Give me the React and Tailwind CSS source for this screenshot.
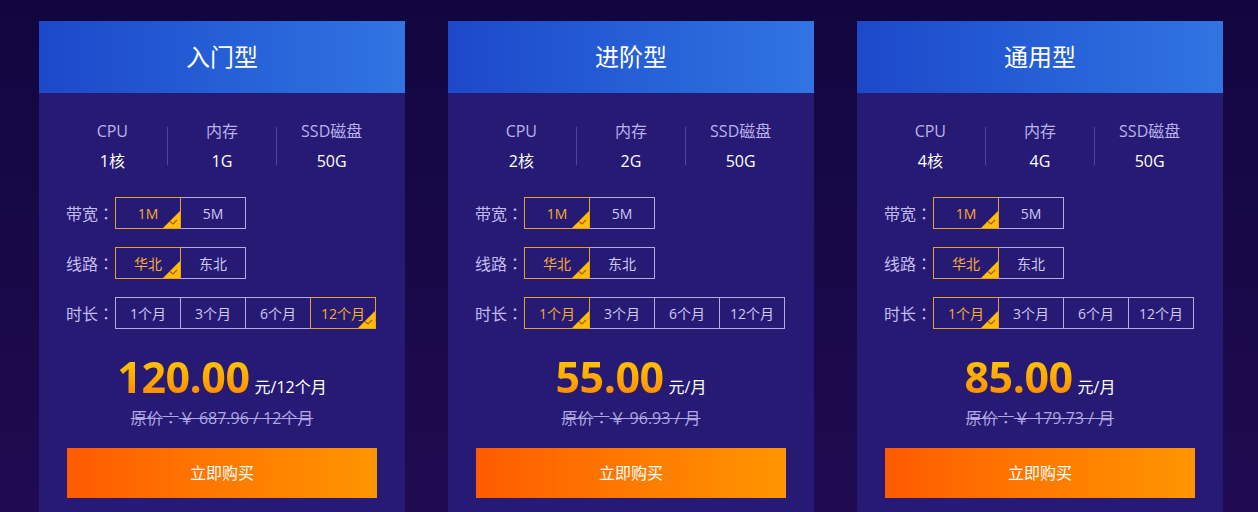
import React from "react";

const plans = [
  { name: "入门型", cpu: "1核", mem: "1G", disk: "50G", dur: 3, price: "120.00", unit: "元/12个月", orig: "￥ 687.96 / 12个月" },
  { name: "进阶型", cpu: "2核", mem: "2G", disk: "50G", dur: 0, price: "55.00", unit: "元/月", orig: "￥ 96.93 / 月" },
  { name: "通用型", cpu: "4核", mem: "4G", disk: "50G", dur: 0, price: "85.00", unit: "元/月", orig: "￥ 179.73 / 月" },
];

const Check = () => (
  <svg className="absolute right-0 bottom-0" width="17" height="17" viewBox="0 0 17 17">
    <path d="M17 0V17H0Z" fill="#ffbe00" />
    <path d="M7 10.5l3 2.5 4-4" stroke="#b8561a" strokeWidth="1.2" fill="none" />
  </svg>
);

// full-width colon, centred like the reference
const Colon = () => <span className="font-['Noto_Sans_CJK_TC']">：</span>;

const OptionRow = ({ label, items, active }) => (
  <div className="flex items-center h-[32px]">
    <span className="w-[49px] text-[16px] text-[#c3bcf0] whitespace-nowrap">
      {label}
      <Colon />
    </span>
    <div className="flex">
      {items.map((it, i) => (
        <div
          key={it}
          className={
            "relative w-[66px] h-[32px] flex items-center justify-center text-[14px] border " +
            (i > 0 ? "-ml-px " : "") +
            (i === active
              ? "z-10 border-[#e9a12e] text-[#f7ad2e]"
              : "border-[#b3abe8] text-[#cfc9f3]")
          }
        >
          {it}
          {i === active && <Check />}
        </div>
      ))}
    </div>
  </div>
);

const Spec = ({ label, value }) => (
  <div className="flex-1 flex flex-col items-center">
    <span className="text-[16px] leading-[20px] text-[#b9b2ec]">{label}</span>
    <span className="mt-[10px] text-[16px] leading-[20px] text-white">{value}</span>
  </div>
);

const Card = ({ p }) => (
  <div className="w-[366px] shrink-0 bg-[#261a74] pb-[40px]">
    <div className="h-[72px] flex items-center justify-center bg-gradient-to-r from-[#1d48ca] to-[#3174e2] text-[24px] text-white">
      {p.name}
    </div>
    <div className="flex items-center mx-[19px] mt-[28px]">
      <Spec label="CPU" value={p.cpu} />
      <div className="w-px h-[38px] bg-[#4d42a6]" />
      <Spec label="内存" value={p.mem} />
      <div className="w-px h-[38px] bg-[#4d42a6]" />
      <Spec label="SSD磁盘" value={p.disk} />
    </div>
    <div className="mt-[26px] pl-[27px] flex flex-col gap-[18px]">
      <OptionRow label="带宽" items={["1M", "5M"]} active={0} />
      <OptionRow label="线路" items={["华北", "东北"]} active={0} />
      <OptionRow label="时长" items={["1个月", "3个月", "6个月", "12个月"]} active={p.dur} />
    </div>
    <div className="mt-[22px] flex items-baseline justify-center">
      <span className="text-[43px] leading-[52px] font-bold tracking-[-0.5px] bg-gradient-to-b from-[#ffd200] to-[#ff7f00] bg-clip-text text-transparent">
        {p.price}
      </span>
      <span className="ml-[5px] text-[16px] text-white">{p.unit}</span>
    </div>
    <div className="mt-[3px] text-center text-[16px] leading-[22px] text-[#aea7e2] line-through">
      原价<Colon />{p.orig}
    </div>
    <div className="mx-[28px] mt-[19px] h-[50px] flex items-center justify-center bg-gradient-to-r from-[#ff5a00] to-[#ff9500] text-[16px] text-white">
      立即购买
    </div>
  </div>
);

export default function App() {
  return (
    <div
      className="min-h-screen h-[512px] overflow-hidden bg-gradient-to-b from-[#110640] to-[#200b50] pl-[39px] pt-[21px] flex gap-[43px]"
      style={{ fontFamily: '"Open Sans", "Noto Sans CJK SC", sans-serif' }}
    >
      {plans.map((p) => (
        <Card key={p.name} p={p} />
      ))}
    </div>
  );
}
